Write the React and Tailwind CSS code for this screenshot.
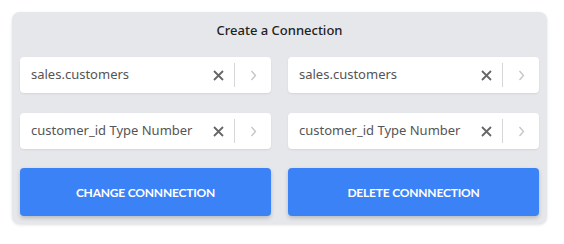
import React from 'react';

const font = { fontFamily: '"Noto Sans", "Open Sans", sans-serif' };

const Field = ({ value }) => (
  <div className="flex h-9 items-center rounded bg-white shadow-[0_1px_2px_rgba(0,0,0,0.08)]">
    <span className="flex-1 truncate pl-[11px] text-[13px] text-[#555]">{value}</span>
    <button className="flex h-full w-8 items-center justify-center text-[#666]">
      <svg width="11" height="11" viewBox="0 0 11 11">
        <path d="M1 1L10 10M10 1L1 10" stroke="currentColor" strokeWidth="1.8" />
      </svg>
    </button>
    <div className="h-6 w-px bg-[#d6d6d6]" />
    <button className="flex h-full w-9 items-center justify-center text-[#c4c4c4]">
      <svg width="7" height="11" viewBox="0 0 7 11">
        <path d="M1.5 1L5.5 5.5L1.5 10" stroke="currentColor" strokeWidth="1.3" fill="none" />
      </svg>
    </button>
  </div>
);

const btn =
  'h-12 rounded bg-[#3b82f6] pt-0.5 text-[12px] font-bold tracking-[-0.2px] text-white shadow-[0_2px_4px_rgba(0,0,0,0.2)]';

export default function App() {
  return (
    <div className="h-[244px] w-[564px] bg-white pl-3 pt-3" style={font}>
      <div className="w-[535px] rounded-lg bg-[#e6e7ea] px-2 pb-2 shadow-[0_1px_3px_rgba(0,0,0,0.12)]">
        <div className="flex h-[45px] items-center justify-center pb-2 text-[13px] font-medium text-[#222]">
          Create a Connection
        </div>
        <div className="grid grid-cols-2 gap-x-[17px] gap-y-5">
          <Field value="sales.customers" />
          <Field value="sales.customers" />
          <Field value="customer_id Type Number" />
          <Field value="customer_id Type Number" />
        </div>
        <div className="mt-[19px] grid grid-cols-2 gap-x-[17px]" style={{ fontFamily: 'Lato, "Noto Sans", sans-serif' }}>
          <button className={btn}>CHANGE CONNNECTION</button>
          <button className={btn}>DELETE CONNNECTION</button>
        </div>
      </div>
    </div>
  );
}
